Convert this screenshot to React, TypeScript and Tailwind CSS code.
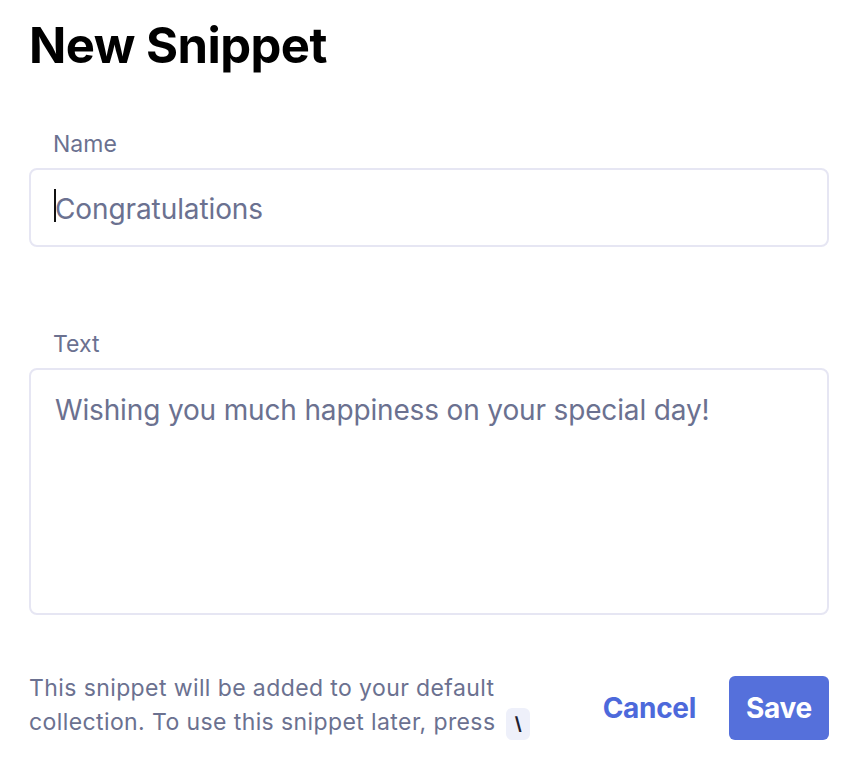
import { useState } from "react";

const App = () => {
  const [name, setName] = useState("Congratulations");
  const [text, setText] = useState("Wishing you much happiness on your special day!");

  return (
    <div className="w-[858px] h-[770px] bg-white px-[29px] pt-[18px] font-['Inter',sans-serif]">
      <h1 className="text-[49px] leading-[56px] font-bold text-black tracking-[-0.55px]">New Snippet</h1>

      {/* Name field */}
      <div className="mt-[57px]">
        <label className="block px-6 text-[23px] leading-[26px] text-[#6b7190]">Name</label>
        <div className="relative mt-[11px]">
          <input
            value={name}
            onChange={(e) => setName(e.target.value)}
            className="w-full h-[79px] rounded-lg border-2 border-[#e6e6f3] px-6 pt-[3px] text-[28px] tracking-[-0.1px] text-[#6b7190] outline-none caret-black"
          />
          {/* caret, the field is focused in the design */}
          <span className="pointer-events-none absolute left-[25px] top-[21px] h-[33px] w-[2px] bg-[#111]" />
        </div>
      </div>

      {/* Text field */}
      <div className="mt-[84px]">
        <label className="block px-6 text-[23px] leading-[26px] text-[#6b7190]">Text</label>
        <textarea
          value={text}
          onChange={(e) => setText(e.target.value)}
          className="mt-[11px] block w-full h-[247px] resize-none rounded-lg border-2 border-[#e6e6f3] px-6 pt-[22px] text-[28px] leading-[36px] tracking-[-0.15px] text-[#6b7190] outline-none"
        />
      </div>

      {/* Footer */}
      <div className="mt-[56px] flex items-start justify-between">
        <p className="w-[520px] text-[23px] leading-[34px] tracking-[0.4px] text-[#6b7190]">
          This snippet will be added to your default collection. To use this snippet later, press{" "}
          <kbd className="ml-1 inline-flex h-[32px] w-[24px] items-center justify-center rounded-md bg-[#eef0fa] align-middle font-['Inter',sans-serif] text-[18px] font-bold text-[#1f2030]">
            \
          </kbd>
        </p>
        <div className="mt-[5px] flex items-center gap-[33px]">
          <button className="text-[28px] font-bold tracking-[-0.3px] text-[#4d69db]">Cancel</button>
          <button className="h-[64px] w-[100px] rounded-md bg-[#5570db] text-[28px] font-bold tracking-[-0.3px] text-white">Save</button>
        </div>
      </div>
    </div>
  );
};

export default App;
